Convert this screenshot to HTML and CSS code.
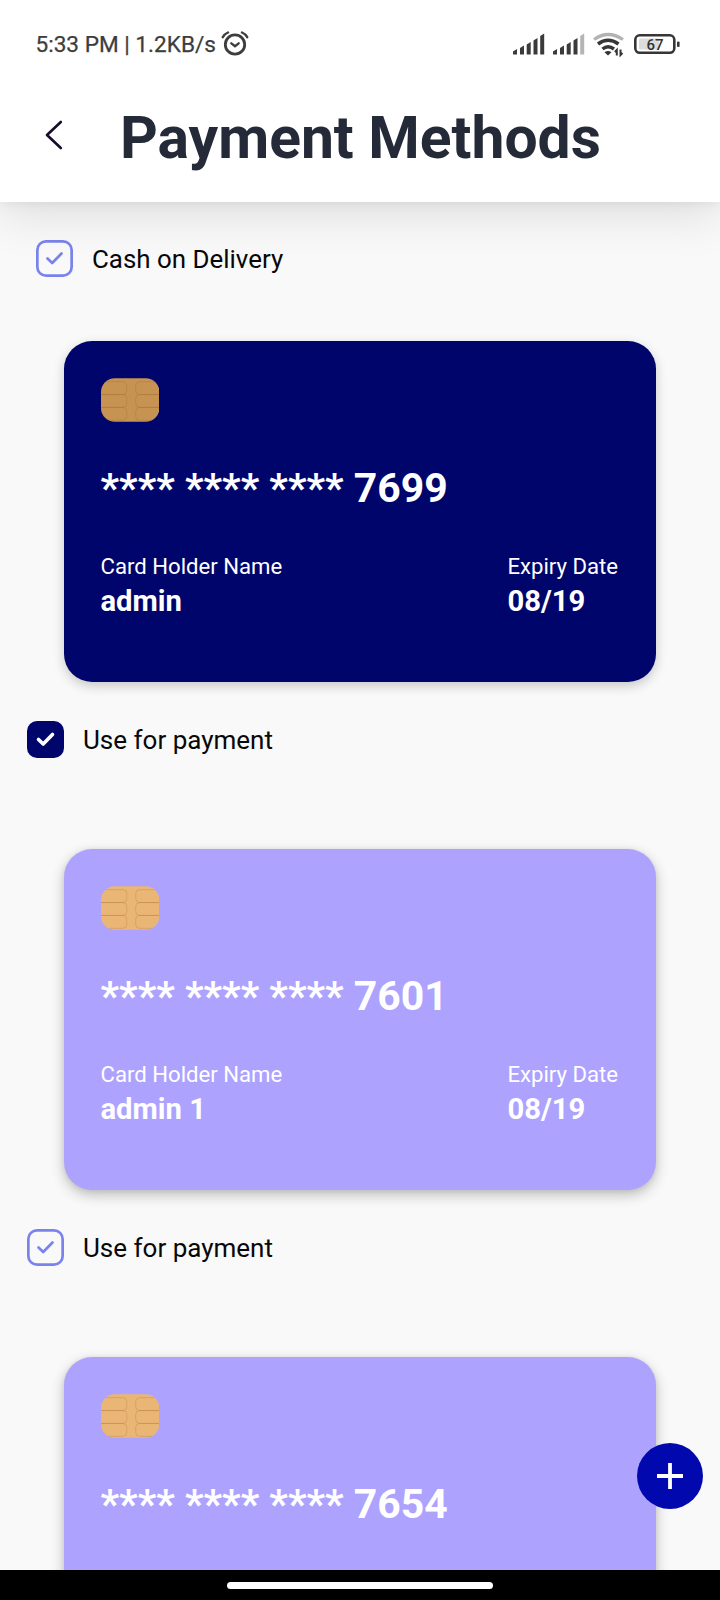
FILE: index.html
```html
<!DOCTYPE html>
<html lang="en">
<head>
<meta charset="utf-8">
<title>Payment Methods</title>
<link rel="stylesheet" href="styles.css">
</head>
<body>
<svg width="0" height="0" class="defs" aria-hidden="true">
  <symbol id="chip" viewBox="0 0 59 44">
    <rect width="59" height="44" rx="14" fill="currentColor"/>
    <g fill="none" stroke="#8a5a20" stroke-opacity=".22" stroke-width=".9">
      <path d="M5 3.5H22q4 0 4 4v5q0 4-4 4H0M0 16.500H22q4 0 4 4v5q0 4-4 4H0M0 29.500H22q4 0 4 4v5q0 4-4 4H8"/>
      <path d="M54 3.500H39q-4 0-4 4v5q0 4 4 4H59M59 16.500H39q-4 0-4 4v5q0 4 4 4H59M59 29.500H39q-4 0-4 4v5q0 4 4 4H51"/>
    </g>
  </symbol>
  <symbol id="check" viewBox="0 0 37 37">
    <path d="M11.500 18.500l4.700 4.500L25.500 13.500" fill="none" stroke="currentColor" stroke-linecap="round" stroke-linejoin="round"/>
  </symbol>
</svg>
<div class="screen">
  <div class="status">
    <span class="clock">5:33 PM | 1.2KB/s</span>
    <svg class="alarm" width="28" height="26" viewBox="0 0 28 26" fill="none" stroke="#3d3d3d" stroke-linecap="round">
      <circle cx="14" cy="13.500" r="9.700" stroke-width="2.800"/>
      <path d="M10.300 12.300l3.700 2.900 3.700-2.900" stroke-width="2.300"/>
      <path d="M1.800 6.200q2-3.400 5.200-4.700M26.200 6.200q-2-3.400-5.200-4.700" stroke-width="2.400"/>
    </svg>
    <svg class="indicators" width="170" height="26" viewBox="0 0 170 26" fill="none">
      <g fill="#3a3a3a">
        <path id="bars" d="M1 22.500v-3l4-2.500v5.500zM8 22.500v-6.500l4-2.500v9zM14.700 22.500v-10l4-2.500v12.500zM21.500 22.500V8.500l4-2.500v16.500z"/>
        <path d="M28.200 22.500V4l4-2.500v21z"/>
        <use href="#bars" x="40"/>
        <path d="M68.200 22.500V4l4-2.500v21z" fill="#b5b5b5"/>
      </g>
      <path d="M82 7.500Q96-2.500 111 7.500" stroke="#b3b3b3" stroke-width="3.200"/>
      <path d="M86 12Q96 4.500 106.500 12M90.500 17Q96 12.500 102 17" stroke="#363636" stroke-width="3.500"/>
      <path d="M92.500 20.200q3.500-2.600 7 0L96 23.500z" fill="#363636"/>
      <path d="M104.800 23.500v-5.500l-2 2M108.500 17.500v5.500l2-2" stroke="#363636" stroke-width="2"/>
      <rect x="123.300" y="3.300" width="39" height="17.500" rx="4.500" stroke="#363636" stroke-width="2.600"/>
      <rect x="127" y="6.500" width="20" height="11" rx="1" fill="#dcdcdc"/>
      <rect x="165" y="9.500" width="2.600" height="5.500" rx="1" fill="#363636"/>
      <text x="143" y="17.500" class="battery-text">67</text>
    </svg>
  </div>
  <header class="header">
    <svg class="back" width="20" height="32" viewBox="0 0 20 32" fill="none" stroke="#170b2c" stroke-width="2.600" stroke-linecap="round" stroke-linejoin="round"><path d="M15.800 3L2 16l13.800 13"/></svg>
    <h1 class="title">Payment Methods</h1>
  </header>
  <main class="content">
    <div class="option option-cash">
      <svg class="checkbox"><use href="#check"/></svg><span>Cash on Delivery</span>
    </div>

    <section class="card card-active">
      <svg class="chip"><use href="#chip"/></svg>
      <div class="number">**** **** **** 7699</div>
      <div class="details">
        <div><div class="label">Card Holder Name</div><div class="value">admin</div></div>
        <div><div class="label">Expiry Date</div><div class="value">08/19</div></div>
      </div>
    </section>
    <div class="option">
      <svg class="checkbox checkbox-on"><use href="#check"/></svg><span>Use for payment</span>
    </div>

    <section class="card">
      <svg class="chip"><use href="#chip"/></svg>
      <div class="number">**** **** **** 7601</div>
      <div class="details">
        <div><div class="label">Card Holder Name</div><div class="value">admin 1</div></div>
        <div><div class="label">Expiry Date</div><div class="value">08/19</div></div>
      </div>
    </section>
    <div class="option">
      <svg class="checkbox"><use href="#check"/></svg><span>Use for payment</span>
    </div>

    <section class="card">
      <svg class="chip"><use href="#chip"/></svg>
      <div class="number">**** **** **** 7654</div>
    </section>
  </main>
  <div class="navbar"><div class="pill"></div></div>
  <button class="fab" aria-label="Add"><svg width="28" height="28" viewBox="0 0 28 28" stroke="#fff" stroke-width="3.800"><path d="M14 1v26M1 14h26"/></svg></button>
</div>
</body>
</html>
```
FILE: styles.css
```css
* { box-sizing: border-box; }
body { margin: 0; font-family: Roboto, "Liberation Sans", sans-serif; }
.defs { position: absolute; }
svg { display: block; flex: none; }

.screen {
  position: relative;
  display: flex;
  flex-direction: column;
  width: 720px;
  height: 1600px;
  overflow: hidden;
  background: #f9f9f9;
}

.status {
  position: relative;
  z-index: 2;
  display: flex;
  align-items: center;
  height: 90px;
  padding: 0 38px 0 35.500px;
  background: #fff;
  color: #3d3d3d;
}
.clock { font-size: 22.600px; line-height: 30px; white-space: nowrap; -webkit-text-stroke: .25px #3d3d3d; }
.alarm { margin: 0 0 3px 5px; }
.indicators { margin-left: auto; }
.battery-text { font-size: 15px; fill: #333; text-anchor: middle; font-weight: 500; }

.header {
  position: relative;
  z-index: 1;
  display: flex;
  align-items: center;
  height: 112px;
  padding: 0 0 17px 45px;
  background: #fff;
  box-shadow: 0 2px 10px rgba(0, 0, 0, .06), 0 14px 48px rgba(0, 0, 0, .11);
}
.back { margin-bottom: 5px; }
.title {
  margin: 0 0 0 55px;
  font-size: 58.800px;
  line-height: 70px;
  font-weight: 700;
  color: #242a38;
  white-space: nowrap;
}

.content { flex: 1; min-height: 0; overflow: hidden; }

.option {
  display: flex;
  align-items: center;
  gap: 19px;
  height: 37px;
  margin: 39px 27px 91px;
  font-size: 26px;
  color: #080808;
}
.option-cash { margin: 38px 36px 64px; font-size: 25.900px; }
.checkbox {
  width: 37px;
  height: 37px;
  border-radius: 10px;
  box-shadow: inset 0 0 0 2.700px #7a83ec;
  color: #7a83ec;
  stroke-width: 2.700px;
}
.checkbox-on {
  box-shadow: none;
  background: #00056c;
  color: #fff;
  stroke-width: 3.600px;
}

.card {
  height: 341px;
  margin: 0 64px;
  padding: 36.500px 38px 0 36.500px;
  border-radius: 28px;
  background: #ada3ff;
  color: #fff;
  box-shadow: 0 5px 14px rgba(0, 0, 0, .24), 0 1px 5px rgba(0, 0, 0, .08);
}
.card-active {
  background: #00056c;
  box-shadow: 0 4px 12px rgba(0, 0, 0, .2);
}
.chip { width: 58.500px; height: 44px; color: #eab676; }
.card-active .chip { color: #c69353; }
.number {
  margin-top: 42.500px;
  font-size: 40.900px;
  line-height: 48px;
  font-weight: 700;
  white-space: nowrap;
}
.details { display: flex; justify-content: space-between; margin-top: 40.500px; }
.label { font-size: 22.150px; line-height: 26px; }
.value { margin-top: 5px; font-size: 29.200px; line-height: 34px; font-weight: 700; }

.navbar {
  display: flex;
  justify-content: center;
  flex: none;
  height: 30px;
  padding-top: 12px;
  background: #000;
}
.pill { width: 266px; height: 7px; border-radius: 4px; background: #fff; }

.fab {
  position: absolute;
  right: 17px;
  bottom: 91px;
  display: flex;
  align-items: center;
  justify-content: center;
  width: 66px;
  height: 66px;
  padding: 0;
  border: 0;
  border-radius: 50%;
  background: #0008ae;
}
```
